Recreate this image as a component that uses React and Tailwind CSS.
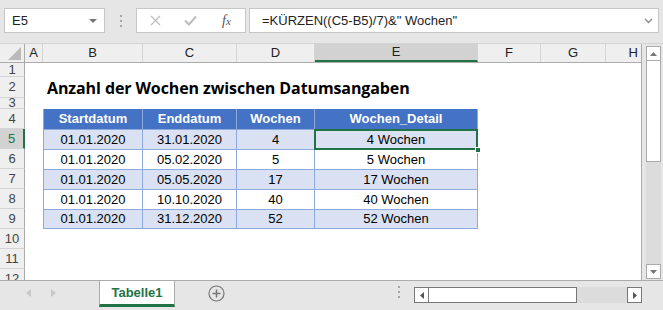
import React from "react";

const cols = [
  { key: "A", w: "w-[18px]" },
  { key: "B", w: "w-[100px]" },
  { key: "C", w: "w-[94px]" },
  { key: "D", w: "w-[78px]" },
  { key: "E", w: "w-[163px]" },
  { key: "F", w: "w-[63px]" },
  { key: "G", w: "w-[65px]" },
  { key: "H", w: "w-[35px]" },
];

const data = [
  ["01.01.2020", "31.01.2020", "4", "4 Wochen"],
  ["01.01.2020", "05.02.2020", "5", "5 Wochen"],
  ["01.01.2020", "05.05.2020", "17", "17 Wochen"],
  ["01.01.2020", "10.10.2020", "40", "40 Wochen"],
  ["01.01.2020", "31.12.2020", "52", "52 Wochen"],
];

const widths = ["w-[100px]", "w-[94px]", "w-[78px]", "w-[163px]"];

const RowHead = ({ n, h, active }) => (
  <div
    className={`w-[25px] shrink-0 ${h} flex items-center justify-center text-[13px] border-b border-[#d4d4d4] ${
      active
        ? "bg-[#d2d2d2] text-[#217346] border-r-2 border-r-[#217346]"
        : "bg-[#efefef] text-[#444] border-r border-r-[#ababab]"
    }`}
  >
    {n}
  </div>
);

const Grid = () => {
  return (
    <div className="w-[642px] flex flex-col bg-white overflow-hidden border-r border-[#ababab]">
      {/* column headers */}
      <div className="flex h-[19px] bg-[#efefef] border-b border-[#ababab] text-[13px] text-[#222]">
        <div className="w-[25px] shrink-0 border-r border-[#ababab] relative">
          <svg width="13" height="13" viewBox="0 0 13 13" className="absolute right-[3px] bottom-[2px]">
            <polygon points="13,0 13,13 0,13" fill="#b9b9b9" />
          </svg>
        </div>
        {cols.map((c) => (
          <div
            key={c.key}
            className={`${c.w} shrink-0 flex items-center justify-center border-r border-[#d4d4d4] ${
              c.key === "E" ? "bg-[#d2d2d2] border-b-2 border-b-[#217346] text-[#222]" : ""
            } ${c.key === "H" ? "justify-end pr-[3px] border-r-0" : ""}`}
          >
            {c.key}
          </div>
        ))}
      </div>

      {/* row 1 */}
      <div className="flex h-[14px]">
        <RowHead n="1" h="h-[14px]" />
      </div>
      {/* row 2 */}
      <div className="flex h-[21px]">
        <RowHead n="2" h="h-[21px]" />
        <div className="w-[18px] shrink-0" />
        <div className="pl-[4px] h-[21px] flex items-center font-bold text-[16px] leading-none text-black whitespace-nowrap font-['Open_Sans'] tracking-[-0.1px]">
          Anzahl der Wochen zwischen Datumsangaben
        </div>
      </div>
      {/* row 3 */}
      <div className="flex h-[11px]">
        <RowHead n="3" h="h-[11px] overflow-hidden leading-[8px]" />
      </div>
      {/* row 4 header of table */}
      <div className="flex h-[20px]">
        <RowHead n="4" h="h-[20px]" />
        <div className="w-[18px] shrink-0" />
        {["Startdatum", "Enddatum", "Wochen", "Wochen_Detail"].map((t, i) => (
          <div
            key={t}
            className={`${widths[i]} shrink-0 h-[20px] bg-[#4472c4] text-white font-bold text-[13px] flex items-center justify-center border-r border-[#8ea9db] ${
              i === 0 ? "border-l" : ""
            }`}
          >
            {t}
          </div>
        ))}
      </div>
      {data.map((r, ri) => (
        <div key={ri} className="flex h-[20px]">
          <RowHead n={String(5 + ri)} h="h-[20px]" active={ri === 0} />
          <div className="w-[18px] shrink-0" />
          {r.map((v, i) => (
            <div
              key={i}
              className={`${widths[i]} shrink-0 h-[20px] text-[13px] text-black flex items-center justify-center border-t border-r border-[#8ea9db] ${
                i === 0 ? "border-l" : ""
              } ${ri === 4 ? "border-b" : ""} ${ri % 2 === 0 ? "bg-[#d9e1f2]" : "bg-white"} ${
                ri === 0 && i === 3 ? "relative" : ""
              }`}
            >
              {v}
              {ri === 0 && i === 3 && (
                <>
                  <div className="absolute -left-[1px] -top-[1px] -right-[1px] -bottom-[1px] border-2 border-[#217346]" />
                  <div className="absolute -right-[4px] -bottom-[4px] w-[6px] h-[6px] bg-[#217346] border border-white" />
                </>
              )}
            </div>
          ))}
        </div>
      ))}
      {["10", "11", "12"].map((n) => (
        <div key={n} className="flex h-[20px]">
          <RowHead n={n} h="h-[20px]" />
        </div>
      ))}
    </div>
  );
};

const VScroll = () => (
  <div className="w-[21px] flex flex-col items-center pt-[2px] pl-[2px] bg-[#e6e6e6]">
    <div className="w-[15px] h-[15px] bg-white border border-[#ababab] flex items-center justify-center">
      <svg width="7" height="4" viewBox="0 0 7 4">
        <polygon points="0,4 7,4 3.5,0" fill="#777" />
      </svg>
    </div>
    <div className="w-[15px] flex-1 bg-[#dcdcdc] flex flex-col">
      <div className="h-[101px] bg-white border border-t-0 border-[#ababab]" />
    </div>
    <div className="w-[15px] h-[15px] bg-white border border-[#ababab] flex items-center justify-center mb-[1px]">
      <svg width="7" height="4" viewBox="0 0 7 4">
        <polygon points="0,0 7,0 3.5,4" fill="#777" />
      </svg>
    </div>
  </div>
);

export default function App() {
  return (
    <div className="w-[663px] h-[310px] bg-[#e6e6e6] flex flex-col overflow-hidden font-['Liberation_Sans',sans-serif]">
      {/* formula bar */}
      <div className="h-[44px] shrink-0 flex items-start pt-[8px] pl-[4px] border-b border-[#d4d4d4]">
        <div className="w-[101px] h-[25px] bg-white border border-[#c6c6c6] flex items-center justify-between pl-[7px] pr-[7px] text-[13px] text-[#222]">
          <span>E5</span>
          <svg width="8" height="4" viewBox="0 0 8 4">
            <polygon points="0,0 8,0 4,4" fill="#777" />
          </svg>
        </div>
        <div className="w-[31px] h-[25px] flex flex-col items-center justify-center gap-[3px]">
          <span className="w-[2px] h-[2px] bg-[#a6a6a6]" />
          <span className="w-[2px] h-[2px] bg-[#a6a6a6]" />
          <span className="w-[2px] h-[2px] bg-[#a6a6a6]" />
        </div>
        <div className="w-[110px] h-[25px] bg-white border border-[#c6c6c6] flex items-center pl-[13px] gap-[23px]">
          <svg width="11" height="11" viewBox="0 0 11 11">
            <path d="M1 1 L10 10 M10 1 L1 10" stroke="#bdbdbd" strokeWidth="1.3" />
          </svg>
          <svg width="13" height="11" viewBox="0 0 13 11">
            <path d="M1 5.5 L5 9.5 L12 1.5" stroke="#bdbdbd" strokeWidth="2" fill="none" />
          </svg>
          <span className="ml-[2px] font-['Liberation_Serif'] italic text-[14px] text-[#555] leading-none">
            f<span className="text-[11px]">x</span>
          </span>
        </div>
        <div className="ml-[3px] w-[410px] h-[25px] bg-white border border-[#c6c6c6] flex items-center justify-between pl-[12px] pr-[5px] text-[13px] text-[#222]">
          <span>=KÜRZEN((C5-B5)/7)&amp;" Wochen"</span>
          <svg width="9" height="6" viewBox="0 0 9 6">
            <path d="M1 1 L4.5 4.5 L8 1" stroke="#888" strokeWidth="1.3" fill="none" />
          </svg>
        </div>
      </div>

      {/* sheet */}
      <div className="flex h-[237px] shrink-0 border-b border-[#ababab]">
        <Grid />
        <VScroll />
      </div>

      {/* tabs + horizontal scroll */}
      <div className="flex-1 flex items-start">
        <div className="w-[99px] h-[24px] flex items-center gap-[20px] pl-[26px]">
          <svg width="5" height="8" viewBox="0 0 5 8">
            <polygon points="5,0 5,8 0,4" fill="#c8c8c8" />
          </svg>
          <svg width="5" height="8" viewBox="0 0 5 8">
            <polygon points="0,0 0,8 5,4" fill="#c8c8c8" />
          </svg>
        </div>
        <div className="w-[76px] h-[26px] bg-white border-x border-[#ababab] border-b-[3px] border-b-[#217346] flex items-center justify-center font-bold text-[13px] text-[#217346]">
          Tabelle1
        </div>
        <div className="ml-[33px] mt-[4px]">
          <svg width="17" height="17" viewBox="0 0 17 17">
            <circle cx="8.5" cy="8.5" r="7.5" stroke="#777" strokeWidth="1.2" fill="none" />
            <path d="M8.5 4.5 V12.5 M4.5 8.5 H12.5" stroke="#777" strokeWidth="1.5" />
          </svg>
        </div>
        <div className="ml-[173px] mt-[5px] flex flex-col gap-[3px]">
          <span className="w-[2px] h-[2px] bg-[#a6a6a6]" />
          <span className="w-[2px] h-[2px] bg-[#a6a6a6]" />
          <span className="w-[2px] h-[2px] bg-[#a6a6a6]" />
        </div>
        <div className="ml-[14px] mt-[6px] w-[228px] h-[16px] flex bg-[#dcdcdc]">
          <div className="w-[15px] h-[16px] bg-white border border-[#777] flex items-center justify-center">
            <svg width="4" height="7" viewBox="0 0 4 7">
              <polygon points="4,0 4,7 0,3.5" fill="#555" />
            </svg>
          </div>
          <div className="w-[148px] h-[16px] bg-white border-y border-r border-[#777]" />
          <div className="flex-1" />
          <div className="w-[15px] h-[16px] bg-white border border-[#777] flex items-center justify-center">
            <svg width="4" height="7" viewBox="0 0 4 7">
              <polygon points="0,0 0,7 4,3.5" fill="#555" />
            </svg>
          </div>
        </div>
      </div>
    </div>
  );
}
